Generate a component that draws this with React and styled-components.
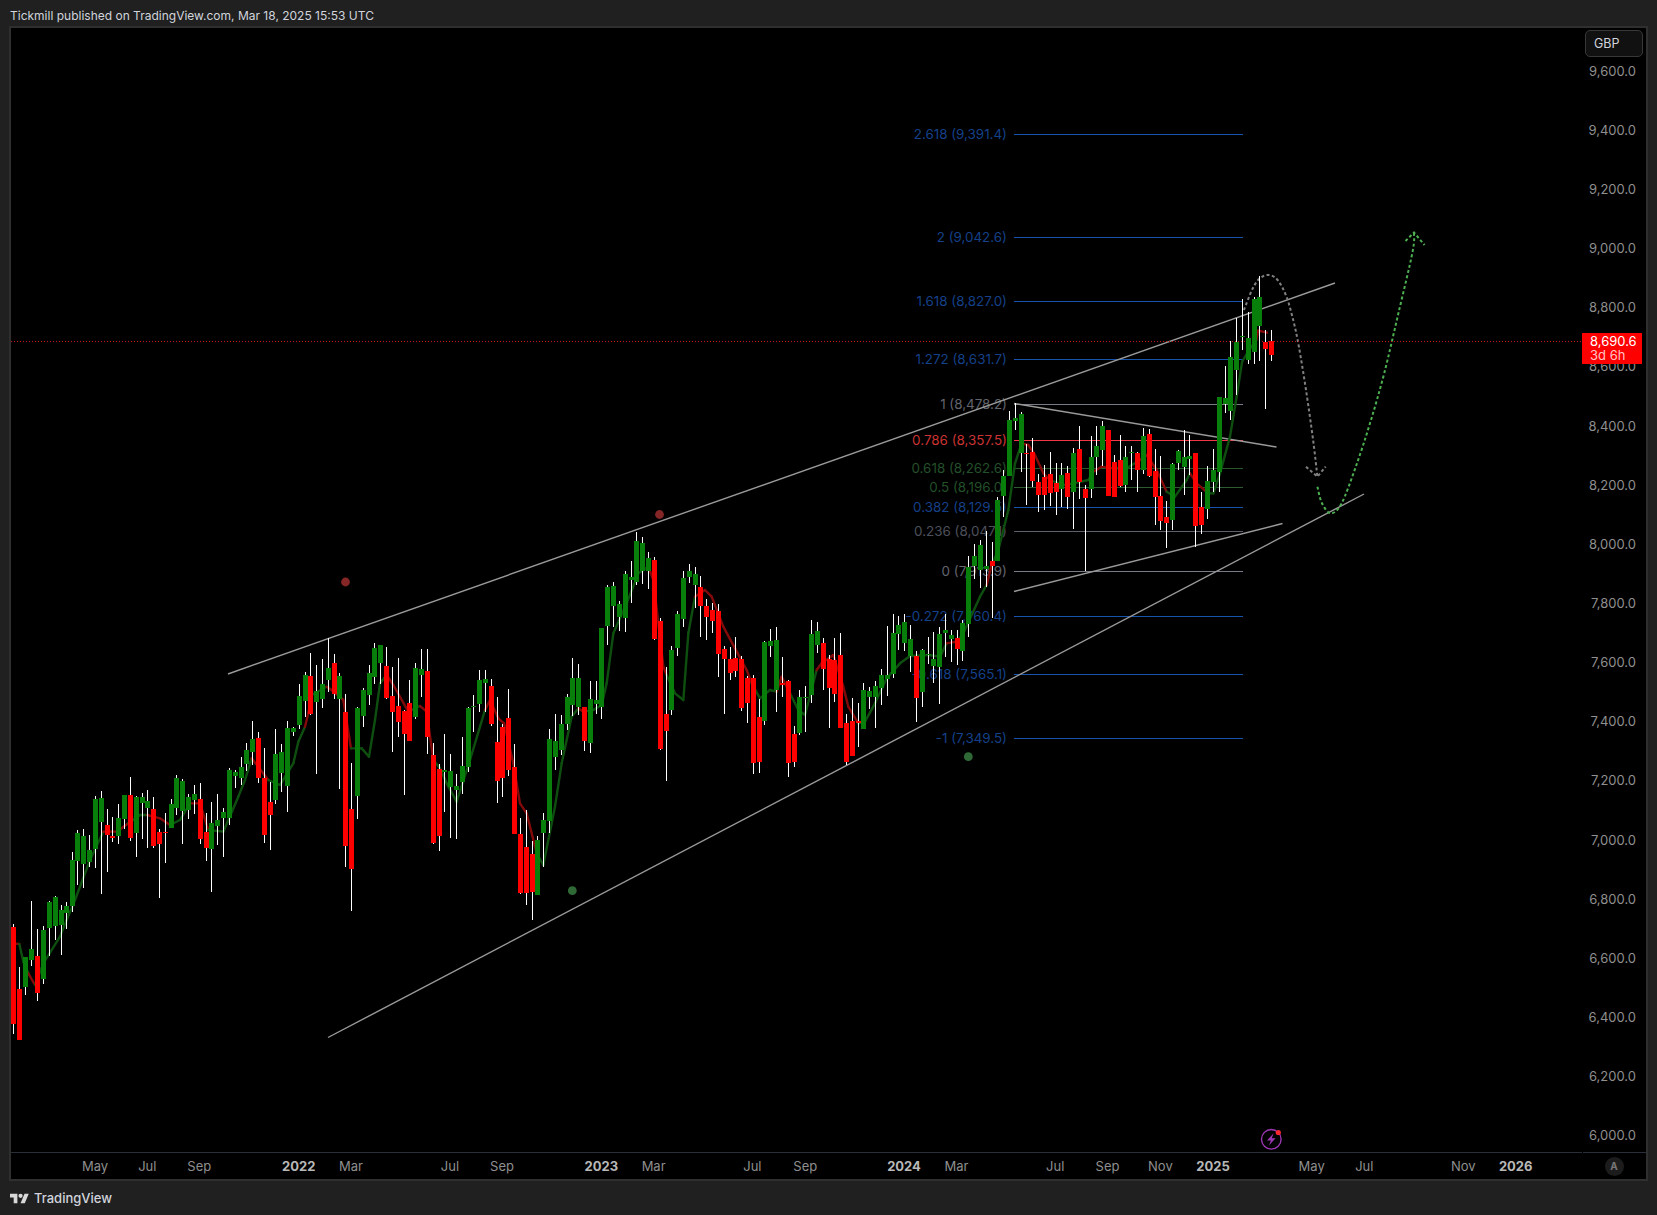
import React from 'react'
import styled, { createGlobalStyle } from 'styled-components'

const GREEN = '#087f0a'
const RED = '#ff0000'
const MA_GREEN = '#0e4f10'
const MA_RED = '#840a0a'

// candles as read off the chart: [x, colour, wickTop, bodyTop, bodyBottom, wickBottom]
// each block has its own origin and scale, values are converted to page px below
const candleBlocks = [
  { ox: 0, oy: 780, sx: 3, bars: [
    [40,'r',432,441,731,762],[58,'r',561,627,780,780],[76,'g',531,531,621,645],[94,'g',363,507,540,558],
    [112,'r',447,528,639,663],[130,'g',438,450,597,612],[148,'g',363,366,444,528],[166,'g',348,351,438,480],
    [184,'g',375,390,435,525],[200,'g',366,378,400,447],[217,'g',216,240,378,396],[232,'g',150,159,243,315],
    [250,'g',147,168,252,324],[268,'g',165,210,246,261],[286,'g',48,57,207,264],[304,'g',33,54,126,342],
    [322,'r',87,135,165,276],[338,'r',111,168,174,186],[356,'g',72,114,168,192],[374,'g',45,45,117,147],
    [391,'r',-9,45,174,183],[409,'g',48,51,159,231],[427,'g',39,51,69,177],[442,'g',30,63,84,204],
    [460,'r',51,87,198,204],[478,'r',147,156,192,354],[496,'r',99,156,159,249],[514,'g',57,72,144,144],
    [530,'g',-15,-6,84,105],[548,'g',-3,3,93,192],[566,'g',42,51,90,117],[584,'g',15,42,60,102],
    [601,'r',9,57,177,192],[619,'r',99,156,204,243],[634,'g',66,129,207,336],[652,'g',42,120,138,195],
    [670,'g',84,96,114,231],
  ] },
  { ox: 120, oy: 690, sx: 3, bars: [
    [328,'g',234,240,384,405],[346,'g',240,246,258,294],[364,'g',201,231,264,285],[379,'g',159,180,222,243],
    [397,'g',93,147,186,225],[415,'r',126,144,264,279],[433,'r',174,264,435,459],[451,'r',276,336,375,480],
    [466,'g',117,192,330,342],
  ] },
  { ox: 280, oy: 620, sx: 3, bars: [
    [4,'g',372,396,459,516],[22,'g',303,324,497,576],[40,'g',321,324,336,348],[58,'g',192,228,315,327],
    [76,'g',156,165,243,291],[91,'r',99,168,282,285],[109,'g',135,213,246,462],[127,'g',117,192,237,264],
    [145,'g',54,144,180,216],[163,'r',102,129,222,237],[178,'g',159,168,237,507],[196,'r',222,276,678,741],
    [214,'r',429,567,747,873],[232,'g',261,264,528,597],[250,'g',204,210,288,321],[268,'g',135,159,225,255],
    [283,'g',69,84,171,192],[301,'g',75,75,129,192],[319,'r',81,138,234,237],[337,'r',141,228,276,396],
    [355,'r',114,258,306,351],[373,'r',270,273,342,525],[388,'r',180,249,363,363],[406,'g',129,144,291,297],
    [424,'g',87,147,165,231],[442,'r',87,153,351,402],[460,'r',369,405,669,672],[478,'r',432,447,648,693],
    [493,'g',342,450,456,576],[511,'g',402,453,501,654],[529,'g',462,498,510,657],[547,'g',351,438,486,522],
    [565,'g',261,264,441,456],[580,'g',225,258,262,336],[598,'g',150,180,252,276],[616,'g',150,177,189,276],
    [634,'r',177,198,312,318],[652,'r',231,366,483,549],[667,'r',312,321,474,531],[685,'r',207,294,450,468],
    [703,'r',372,441,642,642],[721,'r',594,642,819,822],[739,'r',570,681,819,855],[757,'r',663,702,816,900],
    [772,'g',648,660,825,825],[790,'g',579,600,639,741],[808,'g',327,357,603,639],[826,'g',282,363,411,450],
  ] },
  { ox: 560, oy: 520, sx: 3, bars: [
    [4,'g',585,612,690,705],[22,'g',522,531,612,630],[37,'g',414,474,555,588],[55,'g',432,474,561,585],
    [73,'r',561,561,663,693],[91,'g',483,537,669,699],[109,'g',483,540,552,582],[124,'g',324,324,561,597],
    [142,'g',195,201,318,375],[160,'g',186,198,258,321],[178,'g',243,252,291,333],[196,'g',153,162,294,336],
    [214,'g',123,171,180,249],[229,'g',36,63,186,195],[247,'g',51,69,153,192],[265,'g',96,114,153,207],
    [283,'r',111,120,357,360],[301,'r',294,303,687,690],[319,'r',441,582,633,783],[334,'g',378,390,570,585],
    [352,'g',273,282,384,408],[370,'g',153,174,297,321],[388,'g',132,153,171,189],[406,'g',141,162,195,264],
    [421,'r',168,201,258,351],[439,'r',237,258,291,360],[457,'r',249,270,303,339],[475,'r',252,273,402,471],
    [493,'r',378,387,417,582],[511,'r',381,417,459,480],[526,'r',351,414,453,471],[544,'r',408,417,564,573],
    [562,'r',468,474,549,609],[580,'r',465,474,729,762],[598,'r',537,591,726,759],[613,'g',363,366,603,615],
    [631,'g',327,363,378,411],[649,'g',321,360,510,576],[667,'r',411,489,495,531],[685,'r',480,483,729,771],
    [703,'r',618,642,726,741],[718,'g',510,531,639,645],[736,'g',498,531,533,636],[754,'g',300,342,525,549],
    [772,'g',306,333,375,399],[790,'r',354,369,447,510],[808,'r',405,417,504,624],[823,'r',354,420,522,546],
    [841,'r',339,405,624,624],[859,'r',582,609,726,736],[877,'r',534,603,708,708],[895,'r',549,603,609,681],
  ] },
  { ox: 800, oy: 560, sx: 3, bars: [
    [190,'g',369,390,507,507],[208,'g',381,393,411,447],[226,'g',363,378,411,504],[244,'g',327,345,384,435],
    [262,'g',198,345,357,408],[280,'g',162,219,342,354],[295,'g',168,195,222,270],[313,'g',162,186,249,273],
    [331,'g',195,237,288,336],[349,'r',273,288,414,486],[367,'g',267,270,396,441],[385,'g',231,282,285,312],
    [400,'g',216,297,318,369],[418,'g',201,222,321,432],[436,'g',162,210,219,291],[454,'g',210,225,237,306],
    [472,'r',210,234,267,315],[487,'g',180,189,273,303],
  ] },
  { ox: 880, oy: 380, sx: 3, bars: [
    [265,'g',528,561,732,771],[283,'g',492,528,558,597],[301,'g',480,495,570,624],[319,'g',453,558,567,620],
    [337,'r',486,543,558,714],[352,'g',351,360,543,543],[370,'g',270,288,348,411],[388,'g',93,120,288,288],
    [406,'g',69,114,123,150],[424,'g',96,102,219,276],[440,'r',192,219,221,375],[457,'r',174,216,303,321],
    [475,'r',282,306,345,396],[493,'r',255,291,345,390],[511,'r',216,282,339,378],[529,'r',249,309,336,405],
    [544,'g',249,285,327,381],[562,'r',258,279,351,387],[580,'g',204,219,336,447],[598,'r',138,207,306,357],
    [616,'r',315,327,354,573],[634,'g',168,231,327,354],[649,'g',138,198,231,285],[667,'g',123,138,210,258],
    [685,'r',150,150,348,348],[703,'r',225,246,351,351],[721,'r',165,240,318,321],[736,'g',198,231,315,336],
    [754,'g',198,216,219,300],[772,'r',216,219,270,336],[790,'g',144,168,270,282],[808,'r',147,162,288,291],
    [826,'r',207,273,351,435],[841,'r',228,348,423,450],[859,'r',363,411,429,504],[877,'g',249,252,420,450],
    [895,'g',210,213,249,270],[913,'g',150,231,261,345],[928,'g',165,228,237,285],[946,'r',219,219,438,501],
    [964,'r',336,381,435,462],[982,'g',258,303,387,417],[1000,'g',207,270,306,336],[1018,'g',51,51,276,336],
    [1036,'g',-42,54,72,99],
  ] },
  { ox: 1100, oy: 250, sx: 2.815, bars: [
    [367,'g',273,322,483,510],[384,'g',204,276,360,435],[401,'g',147,257,260,300],[418,'g',186,264,330,342],
    [435,'g',141,147,306,342],[449,'g',78,141,228,333],[466,'r',240,276,297,477],[483,'r',240,273,315,333],
  ] },
]

const candles = candleBlocks.flatMap(({ ox, oy, sx, bars }) =>
  bars.map(([x, c, wt, bt, bb, wb]) => ({
    x: Math.floor(ox + x / sx),
    up: c === 'g',
    wickTop: oy + wt / 3,
    wickBottom: oy + wb / 3,
    bodyTop: oy + bt / 3,
    bodyBottom: oy + bb / 3,
  }))
)

// moving average, the colour belongs to the piece that ends at the point
const maBlocks = [
  { ox: 0, oy: 780, sx: 3, pts: [
    [33,460,'r'],[40,490,'r'],[58,492,'r'],[70,545,'g'],[85,580,'g'],[105,615,'r'],[130,550,'g'],[180,470,'g'],
    [200,420,'g'],[225,360,'g'],[270,240,'g'],[310,155,'g'],[350,155,'r'],[385,130,'r'],[420,105,'g'],[442,105,'g'],
    [480,115,'r'],[510,135,'r'],[540,120,'g'],[570,70,'g'],[600,70,'r'],[625,150,'r'],[670,155,'g'],[715,50,'g'],[735,0,'g'],
  ] },
  { ox: 120, oy: 690, sx: 3, pts: [[395,205,'g'],[445,270,'r'],[480,285,'g']] },
  { ox: 280, oy: 620, sx: 3, pts: [
    [40,430,'g'],[55,365,'g'],[75,320,'g'],[85,280,'r'],[95,225,'r'],[140,200,'g'],[155,210,'r'],[190,240,'r'],
    [213,385,'r'],[245,385,'g'],[267,410,'g'],[285,300,'g'],[300,190,'g'],[320,165,'g'],[340,195,'r'],[385,275,'r'],
    [420,258,'g'],[440,275,'r'],[460,420,'r'],[480,445,'g'],[500,490,'g'],[530,545,'g'],[570,420,'g'],[600,320,'g'],
    [615,270,'g'],[630,240,'r'],[655,295,'r'],[672,310,'r'],[700,430,'r'],[720,550,'r'],[740,580,'r'],[770,700,'r'],
    [790,735,'g'],[825,560,'g'],[845,430,'g'],[875,290,'g'],[895,265,'g'],
  ] },
  { ox: 560, oy: 520, sx: 3, pts: [
    [70,575,'r'],[100,570,'g'],[125,555,'g'],[140,490,'g'],[160,340,'g'],[200,250,'g'],[235,160,'g'],[265,140,'g'],
    [280,180,'r'],[310,440,'r'],[320,465,'r'],[345,520,'g'],[370,540,'g'],[385,340,'g'],[405,230,'g'],[435,210,'r'],
    [455,230,'r'],[490,320,'r'],[525,385,'r'],[560,450,'r'],[575,490,'r'],[600,535,'g'],[630,510,'g'],[650,515,'g'],
    [665,470,'r'],[690,520,'r'],[715,570,'g'],[735,585,'g'],[770,450,'g'],[785,430,'r'],[820,405,'r'],[850,500,'r'],
    [865,560,'r'],[895,610,'r'],
  ] },
  { ox: 800, oy: 560, sx: 3, pts: [
    [195,485,'g'],[225,430,'g'],[260,355,'g'],[300,310,'g'],[330,288,'g'],[385,285,'g'],[420,290,'g'],[440,250,'g'],
    [470,245,'r'],[490,220,'g'],[540,110,'g'],[560,75,'g'],[575,15,'r'],
  ] },
  { ox: 880, oy: 380, sx: 3, pts: [
    [355,510,'g'],[385,390,'g'],[405,250,'g'],[425,190,'g'],[445,195,'r'],[465,225,'r'],[490,280,'r'],[510,300,'r'],
    [550,315,'g'],[580,310,'g'],[625,300,'g'],[640,275,'g'],[665,260,'r'],[700,265,'r'],[740,265,'g'],[780,240,'g'],
    [800,225,'r'],[830,270,'r'],[860,335,'r'],[885,350,'g'],[920,300,'g'],[930,280,'g'],[950,310,'r'],[985,340,'r'],
    [1000,340,'g'],[1020,280,'g'],[1050,170,'g'],[1070,50,'g'],
  ] },
  { ox: 1100, oy: 250, sx: 2.815, pts: [[400,335,'g'],[420,300,'g'],[440,270,'g'],[445,242,'r'],[470,248,'r']] },
]

const maPoints = maBlocks.flatMap(({ ox, oy, sx, pts }) =>
  pts.map(([x, y, c]) => ({ x: ox + x / sx, y: oy + y / 3, c }))
)

const BLUE = '#1553ad'
const BLUE_TEXT = '#15408a'
const fibLevels = [
  { y: 134.5, label: '2.618 (9,391.4)', line: BLUE, text: BLUE_TEXT },
  { y: 237.5, label: '2 (9,042.6)', line: BLUE, text: BLUE_TEXT },
  { y: 301.5, label: '1.618 (8,827.0)', line: BLUE, text: BLUE_TEXT },
  { y: 359.5, label: '1.272 (8,631.7)', line: BLUE, text: BLUE_TEXT },
  { y: 404.5, label: '1 (8,478.2)', line: '#787b86', text: '#63656e' },
  { y: 440.5, label: '0.786 (8,357.5)', line: '#f23645', text: '#cc3333' },
  { y: 468.5, label: '0.618 (8,262.6)', line: '#27592a', text: '#23502a' },
  { y: 487.5, label: '0.5 (8,196.0)', line: '#2f5b33', text: '#23502a' },
  { y: 507.5, label: '0.382 (8,129.5)', line: '#1553ad', text: BLUE_TEXT },
  { y: 531.5, label: '0.236 (8,047.1)', line: '#5d606b', text: '#4d505b' },
  { y: 571.5, label: '0 (7,913.9)', line: '#787b86', text: '#63656e' },
  { y: 616.5, label: '-0.272 (7,760.4)', line: BLUE, text: BLUE_TEXT },
  { y: 674.5, label: '-0.618 (7,565.1)', line: BLUE, text: BLUE_TEXT },
  { y: 738.5, label: '-1 (7,349.5)', line: BLUE, text: BLUE_TEXT },
]

const trendLines = [
  [228, 674, 1335, 283],
  [328, 1037.5, 1364, 494],
  [1014, 403.5, 1276.5, 447],
  [1014, 591.5, 1282.5, 523.5],
]

const dots = [
  { x: 345.5, y: 582, fill: '#842626' },
  { x: 659.5, y: 514.5, fill: '#842626' },
  { x: 572.3, y: 890.7, fill: '#2f6a36' },
  { x: 968.3, y: 756.7, fill: '#2f6a36' },
]

const grayPath = [[1243.9,310],[1252.8,288.3],[1259.9,278.3],[1268.7,275],[1277.6,280],[1286.5,296.7],[1293.6,321.7],[1298.9,346.7],[1306,390],[1313.1,440],[1317.4,476.7]]
const greenPath = [[1317.4,486.7],[1322,503.3],[1330.9,513.3],[1341.6,503.3],[1355.8,466.7],[1370,423.3],[1384.2,373.3],[1398.4,313.3],[1412.6,251.7],[1414,232.5]]

// catmull-rom through the points, written out as cubic beziers
const smooth = (pts) => {
  let d = `M${pts[0][0]} ${pts[0][1]}`
  for (let i = 0; i < pts.length - 1; i++) {
    const p0 = pts[i - 1] || pts[i]
    const p1 = pts[i]
    const p2 = pts[i + 1]
    const p3 = pts[i + 2] || p2
    d += ` C${p1[0] + (p2[0] - p0[0]) / 6} ${p1[1] + (p2[1] - p0[1]) / 6} ${p2[0] - (p3[0] - p1[0]) / 6} ${p2[1] - (p3[1] - p1[1]) / 6} ${p2[0]} ${p2[1]}`
  }
  return d
}

const prices = ['9,600.0','9,400.0','9,200.0','9,000.0','8,800.0','8,600.0','8,400.0','8,200.0','8,000.0','7,800.0','7,600.0','7,400.0','7,200.0','7,000.0','6,800.0','6,600.0','6,400.0','6,200.0','6,000.0']

const timeTicks = [
  { x: 95, label: 'May' }, { x: 147.3, label: 'Jul' }, { x: 199.3, label: 'Sep' },
  { x: 298.7, label: '2022', year: true }, { x: 351, label: 'Mar' }, { x: 450, label: 'Jul' },
  { x: 502, label: 'Sep' }, { x: 601.3, label: '2023', year: true }, { x: 653.6, label: 'Mar' },
  { x: 752.4, label: 'Jul' }, { x: 805.3, label: 'Sep' }, { x: 904, label: '2024', year: true },
  { x: 956.4, label: 'Mar' }, { x: 1055.2, label: 'Jul' }, { x: 1107.5, label: 'Sep' },
  { x: 1160.4, label: 'Nov' }, { x: 1213, label: '2025', year: true }, { x: 1311.7, label: 'May' },
  { x: 1364.3, label: 'Jul' }, { x: 1463.3, label: 'Nov' }, { x: 1515.7, label: '2026', year: true },
]

const GlobalStyle = createGlobalStyle`
  html, body {
    margin: 0;
    padding: 0;
    background: #202020;
  }
  body {
    font-family: Inter, "Liberation Sans", sans-serif;
  }
`

const Page = styled.div`
  width: 1657px;
  height: 1215px;
  display: flex;
  flex-direction: column;
  background: #202020;
  overflow: hidden;
`

const Header = styled.header`
  height: 26px;
  flex: none;
  display: flex;
  align-items: center;
  padding: 4px 0 0 10px;
  box-sizing: border-box;
  color: #d1d4dc;
  font-size: 12px;
`

const Frame = styled.main`
  flex: none;
  height: 1155px;
  margin: 0 9px;
  box-sizing: border-box;
  border: 2px solid #2f2f2f;
  background: #000;
  display: grid;
  grid-template-columns: 1571px 64px;
  grid-template-rows: 1124px 27px;
`

const Plot = styled.svg`
  display: block;
  width: 1571px;
  height: 1124px;
`

const FibLabel = styled.text`
  font-size: 13.4px;
  text-anchor: end;
  dominant-baseline: central;
`

const PriceAxis = styled.div`
  position: relative;
  display: flex;
  flex-direction: column;
  padding: 13px 10px 0 0;
  box-sizing: border-box;
  overflow: hidden;
`

const PriceTick = styled.div`
  flex: 0 0 59.17px;
  display: flex;
  align-items: center;
  justify-content: flex-end;
  color: #8f8f8f;
  font-size: 13px;
`

const CurrencyButton = styled.div`
  position: absolute;
  top: 2px;
  left: 3px;
  width: 58px;
  height: 27px;
  box-sizing: border-box;
  padding-left: 8px;
  display: flex;
  align-items: center;
  background: #111;
  border: 1px solid #383838;
  border-radius: 5px;
  color: #d1d4dc;
  font-size: 12.5px;
`

const PriceTag = styled.div`
  position: absolute;
  top: 305px;
  left: 0;
  width: 60px;
  height: 31px;
  padding: 0 0 2px 8px;
  box-sizing: border-box;
  background: #ff0000;
  color: #fff;
  font-size: 13px;
  line-height: 14px;
  display: flex;
  flex-direction: column;
  justify-content: center;
`

const Countdown = styled.span`
  color: #ffc4c4;
`

const TimeAxis = styled.div`
  position: relative;
  border-top: 1px solid #2a2e39;
`

const TimeTick = styled.span`
  position: absolute;
  top: 0;
  bottom: 0;
  left: ${(p) => p.$x - 11}px;
  transform: translateX(-50%);
  display: flex;
  align-items: center;
  color: ${(p) => (p.$year ? '#b8b8b8' : '#8f8f8f')};
  font-size: 13px;
  font-weight: ${(p) => (p.$year ? 700 : 400)};
`

const Corner = styled.div`
  border-top: 1px solid #2a2e39;
  margin-left: 1px;
  display: flex;
  align-items: center;
  justify-content: center;
  padding-right: 1px;
`

const AutoButton = styled.div`
  width: 19px;
  height: 19px;
  border-radius: 50%;
  background: #1c1c1c;
  color: #777;
  font-size: 10px;
  font-weight: 700;
  display: flex;
  align-items: center;
  justify-content: center;
`

const Footer = styled.footer`
  flex: 1;
  display: flex;
  align-items: center;
  gap: 5px;
  padding: 0 0 0 10px;
  color: #d1d4dc;
  font-size: 13px;
  font-weight: 500;
`

const Logo = styled.svg`
  width: 19px;
  height: 11px;
  flex: none;
`

const Candle = ({ x, up, wickTop, wickBottom, bodyTop, bodyBottom }) => (
  <g shapeRendering="crispEdges">
    <rect x={x} y={wickTop} width={1} height={wickBottom - wickTop} fill="#fff" />
    <rect x={x - 2} y={bodyTop} width={5} height={Math.max(bodyBottom - bodyTop, 1)} fill={up ? GREEN : RED} />
  </g>
)

const Chart = () => (
  <Plot viewBox="11 28 1571 1124">
    {fibLevels.map((l) => (
      <FibLabel key={l.label} x={1007} y={l.y - 0.5} fill={l.text}>{l.label}</FibLabel>
    ))}
    {fibLevels.map((l) => (
      <line key={l.label} x1={1014} x2={1242.5} y1={l.y} y2={l.y} stroke={l.line} strokeWidth={1} shapeRendering="crispEdges" />
    ))}
    {trendLines.map(([x1, y1, x2, y2]) => (
      <line key={x1 + y1} x1={x1} y1={y1} x2={x2} y2={y2} stroke="#9a9a9a" strokeWidth={1.4} />
    ))}
    <path d={smooth(grayPath)} fill="none" stroke="#808080" strokeWidth={2} strokeDasharray="3 2.4" />
    <path d="M1306 466.7 L1317.4 476.7 L1325.6 466.7" fill="none" stroke="#808080" strokeWidth={2} strokeDasharray="3 2.4" />
    <path d={smooth(greenPath)} fill="none" stroke="#4caf50" strokeWidth={2} strokeDasharray="3 2.4" />
    <path d="M1405.5 241 L1414 232.5 L1424.5 245" fill="none" stroke="#4caf50" strokeWidth={2} strokeDasharray="3 2.4" />
    <line x1={11} x2={1582} y1={341.5} y2={341.5} stroke="#c81414" strokeWidth={1} strokeDasharray="1 2" shapeRendering="crispEdges" />
    {maPoints.slice(1).map((p, i) => (
      <line
        key={i}
        x1={maPoints[i].x}
        y1={maPoints[i].y}
        x2={p.x}
        y2={p.y}
        stroke={p.c === 'g' ? MA_GREEN : MA_RED}
        strokeWidth={2.4}
        strokeLinecap="round"
      />
    ))}
    {candles.map((c, i) => (
      <Candle key={i} {...c} />
    ))}
    {dots.map((d) => (
      <circle key={d.x} cx={d.x} cy={d.y} r={4.4} fill={d.fill} />
    ))}
    <circle cx={1271.3} cy={1139.3} r={9.8} fill="none" stroke="#9c37b3" strokeWidth={1.4} />
    <path d="M1273.6 1133.2 L1267 1140.4 H1270.8 L1269 1145.4 L1275.6 1138.2 H1271.8 Z" fill="#9c37b3" />
    <circle cx={1278.3} cy={1132.5} r={2.6} fill="#f7282f" />
  </Plot>
)

const App = () => (
  <Page>
    <GlobalStyle />
    <Header>Tickmill published on TradingView.com, Mar 18, 2025 15:53 UTC</Header>
    <Frame>
      <Chart />
      <PriceAxis>
        {prices.map((p) => (
          <PriceTick key={p}>{p}</PriceTick>
        ))}
        <CurrencyButton>GBP</CurrencyButton>
        <PriceTag>
          <span>8,690.6</span>
          <Countdown>3d 6h</Countdown>
        </PriceTag>
      </PriceAxis>
      <TimeAxis>
        {timeTicks.map((t) => (
          <TimeTick key={t.x} $x={t.x} $year={t.year}>{t.label}</TimeTick>
        ))}
      </TimeAxis>
      <Corner>
        <AutoButton>A</AutoButton>
      </Corner>
    </Frame>
    <Footer>
      <Logo viewBox="0 3 36 20" fill="#d9d9d9">
        <path d="M14 22H7V11H0V4h14v18zM28 22h-8l7.5-18h8L28 22z" />
        <circle cx="20" cy="8" r="4" />
      </Logo>
      TradingView
    </Footer>
  </Page>
)

export default App
